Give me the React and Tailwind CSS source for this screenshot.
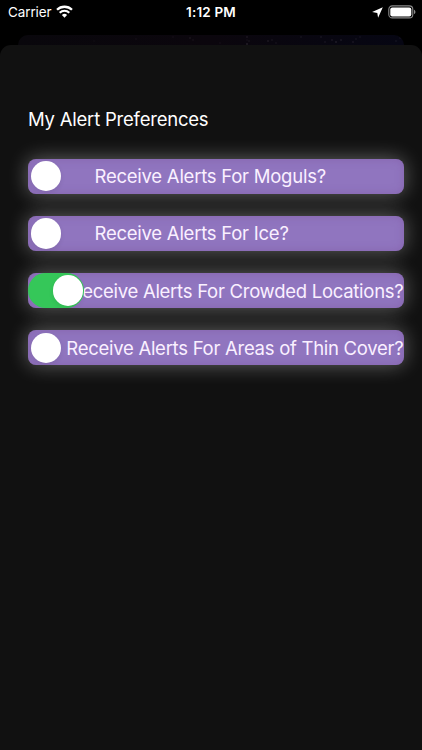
import { useState } from 'react'
import clsx from 'clsx'

const preferences = [
  { id: 'moguls', label: 'Receive Alerts For Moguls?', on: false },
  { id: 'ice', label: 'Receive Alerts For Ice?', on: false },
  { id: 'crowded', label: 'Receive Alerts For Crowded Locations?', on: true, end: true },
  { id: 'thin', label: 'Receive Alerts For Areas of Thin Cover?', on: false, end: true },
]

// x, y, opacity of the specks in the night sky
const stars = [
  [22, 6, 0.06], [64, 4, 0.08], [101, 2, 0.08], [118, 3, 0.14], [121, 5, 0.1],
  [148, 8, 0.08], [175, 5, 0.08], [175, 2, 0.16], [177, 6, 0.12], [175, 9, 0.25],
  [196, 6, 0.18], [200, 5, 0.12], [204, 8, 0.1], [229, 2, 0.12], [249, 2, 0.14],
  [253, 7, 0.13], [260, 5, 0.16], [264, 7, 0.22], [269, 5, 0.18], [281, 7, 0.16],
  [284, 4, 0.12], [288, 2, 0.1], [324, 6, 0.12], [328, 3, 0.1],
]

function StatusBar() {
  return (
    <div className="h-[35px] px-2 pb-[10px] grid grid-cols-3 items-center text-white">
      <div className="flex items-center gap-[5px]">
        <span className="text-[13.5px] leading-none tracking-[-0.12px] pt-px">Carrier</span>
        <svg width="17" height="13" viewBox="0 0 17 13" fill="none" stroke="currentColor" className="-translate-y-px">
          <path d="M1 4.8a10.7 10.7 0 0 1 15 0" strokeWidth="2.3" />
          <path d="M3.7 7.7a6.9 6.9 0 0 1 9.6 0" strokeWidth="2.1" />
          <path d="M8.5 12.7 5.9 10a3.8 3.8 0 0 1 5.2 0z" fill="currentColor" stroke="none" />
        </svg>
      </div>
      <span className="text-center text-[13.5px] leading-none font-semibold tracking-[0.15px] pt-px">1:12 PM</span>
      <div className="flex items-center justify-end gap-[5px] mr-[-2px]">
        <svg width="11" height="11" viewBox="0 0 11 11" fill="currentColor">
          <path d="M10.8.2 6.1 10.8 5.3 5.9.1 5.1z" />
        </svg>
        <svg width="28" height="14" viewBox="0 0 28 14" className="-translate-y-px">
          <rect x="0.8" y="0.9" width="24" height="12" rx="3.5" fill="none" stroke="#8a8a8a" strokeWidth="1.1" />
          <rect x="2.3" y="2.4" width="21" height="9" rx="2" fill="#fff" />
          <path d="M26 4.7c1.9.7 1.9 3.7 0 4.4z" fill="#8a8a8a" />
        </svg>
      </div>
    </div>
  )
}

function Toggle({ on, label, onChange }) {
  return (
    <button
      role="switch"
      aria-checked={on}
      aria-label={label}
      onClick={onChange}
      className={clsx(
        'relative z-10 shrink-0 w-14 h-full rounded-full flex items-center',
        on ? 'bg-[#35c759] justify-end pr-[0.6px]' : 'justify-start pl-[2.6px]',
      )}
    >
      <span className="size-[30.5px] rounded-full bg-white shadow-[0_2px_5px_rgba(0,0,0,0.08)]" />
    </button>
  )
}

function PreferenceRow({ item, onChange }) {
  return (
    <div className="h-[35px] flex items-center rounded-[8px] bg-[#9075bf] shadow-[0_0_20px_rgba(255,255,255,0.36),inset_0_0_9px_rgba(125,85,160,0.5)]">
      <Toggle on={item.on} label={item.label} onChange={onChange} />
      <span
        className={clsx(
          'flex-1 min-w-0 flex whitespace-nowrap text-[18.5px] leading-[20px] text-[#faf0ff]',
          item.end ? 'justify-end pr-[0.5px] tracking-[-0.27px]' : 'pl-[10.5px] tracking-[-0.24px]',
        )}
      >
        {item.label}
      </span>
    </div>
  )
}

export default function App() {
  const [items, setItems] = useState(preferences)

  const toggle = (id) => {
    setItems(items.map((item) => (item.id === id ? { ...item, on: !item.on } : item)))
  }

  return (
    <div className="w-[422px] h-[750px] flex flex-col overflow-hidden bg-black font-['Inter','Liberation_Sans',sans-serif]">
      <StatusBar />
      <div className="mx-[18px] h-[10px] shrink-0 rounded-t-[10px] overflow-hidden bg-linear-to-r from-[#09070c] via-[#0b060d] to-[#060613]">
        <svg width="386" height="10" fill="#b8a9b8">
          {stars.map(([x, y, opacity]) => (
            <circle key={x + '-' + y} cx={x + 54} cy={y} r="0.8" opacity={opacity} />
          ))}
        </svg>
      </div>
      <main className="flex-1 rounded-t-[11px] bg-[#111111] pl-7 pr-[18px] pt-[62px]">
        <h1 className="text-[18.5px] leading-6 tracking-[-0.22px] text-white">My Alert Preferences</h1>
        <div className="mt-[27.7px] flex flex-col gap-[22.25px]">
          {items.map((item) => (
            <PreferenceRow key={item.id} item={item} onChange={() => toggle(item.id)} />
          ))}
        </div>
      </main>
    </div>
  )
}
